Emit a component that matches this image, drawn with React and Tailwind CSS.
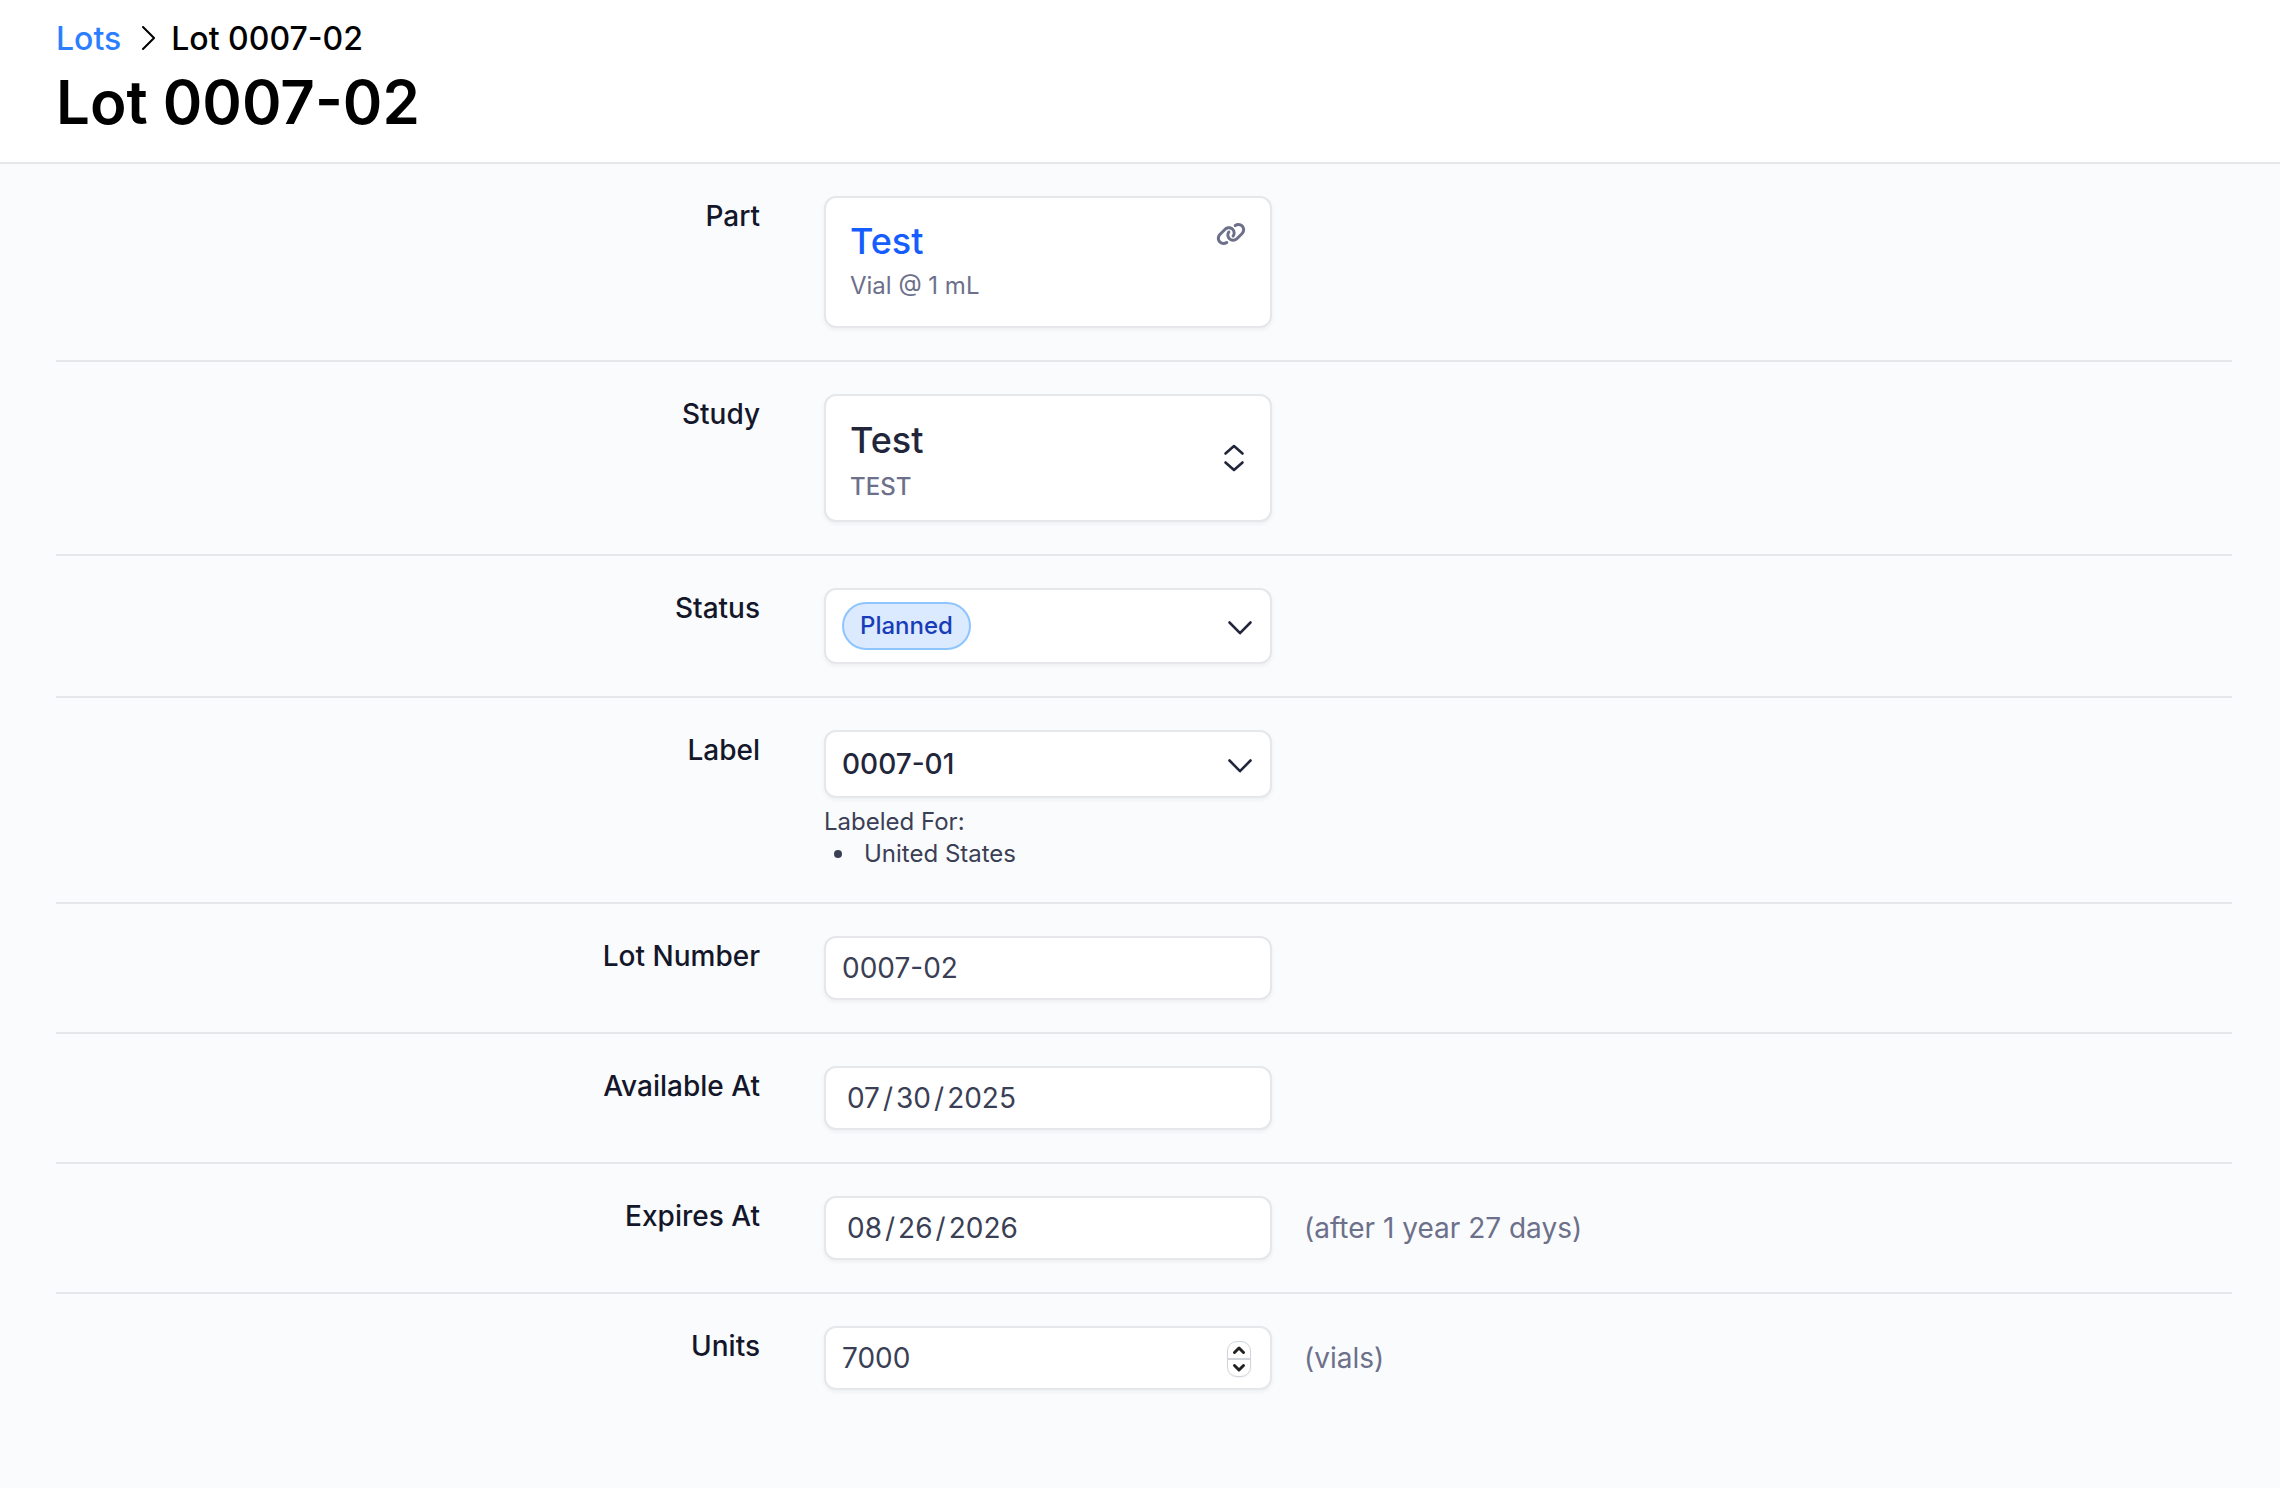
import React, { useState } from "react";
import { FaLink } from "react-icons/fa6";

const boxClass =
    "block w-full bg-white border-2 border-gray-200 rounded-xl shadow-[0_2px_4px_rgba(0,0,0,0.05)] focus:outline-none";

const inputClass = `${boxClass} h-16 px-4 text-[28px] text-[#3b3f55]`;

const dateClass = `${boxClass} h-16 px-5 text-[28px] text-[#3b3f55] [&::-webkit-calendar-picker-indicator]:hidden [&::-webkit-datetime-edit-text]:px-0.5`;

const ChevronDown = ({ className }) => (
    <svg className={className} width="28" height="28" viewBox="0 0 28 28" fill="none" stroke="currentColor" strokeWidth="2.6" strokeLinecap="round" strokeLinejoin="round">
        <path d="M3.5 10.5L14 21.2L24.5 10.5" />
    </svg>
);

const labelClass = "flex-1 text-right text-[28px] leading-10 font-medium text-[#14172a]";

const Row = ({ label, htmlFor, note, children }) => (
    <div className="flex gap-16 py-8 border-b-2 border-gray-200 last:border-b-0">
        {htmlFor ? (
            <label htmlFor={htmlFor} className={labelClass}>{label}</label>
        ) : (
            <span className={labelClass}>{label}</span>
        )}
        <div className="flex-2 flex items-center gap-8">
            <div className="w-[448px]">{children}</div>
            {note && <span className="text-[28px] leading-10 text-[#6c708a]">{note}</span>}
        </div>
    </div>
);

const App = () => {
    const [label, setLabel] = useState("0007-01");
    const [lotNumber, setLotNumber] = useState("0007-02");
    const [availableAt, setAvailableAt] = useState("2025-07-30");
    const [expiresAt, setExpiresAt] = useState("2026-08-26");
    const [units, setUnits] = useState(7000);

    return (
        <div className="min-h-screen bg-[#fafbfd] font-['Inter',sans-serif]">
            <header className="bg-white border-b-2 border-gray-200 px-14 pt-4 pb-[22px]">
                <nav aria-label="Breadcrumb" className="flex items-center gap-4 text-[32px] leading-[46px] font-medium text-black">
                    <a href="#lots" className="text-blue-500">Lots</a>
                    <svg width="18" height="28" viewBox="0 0 18 28" fill="none" stroke="currentColor" strokeWidth="2" strokeLinecap="round">
                        <path d="M6 2l11 11L6 24" />
                    </svg>
                    <span>Lot 0007-02</span>
                </nav>
                <h1 className="mt-0.5 text-[60px] leading-[76px] font-semibold text-black">Lot 0007-02</h1>
            </header>

            <main className="pl-14 pr-12">
                <Row label="Part">
                    <div className={`${boxClass} h-[132px]`}>
                        <div className="p-6 flex justify-between items-start">
                            <div>
                                <a href="#part" className="block text-[36px] leading-[38px] font-medium text-blue-600">Test</a>
                                <p className="text-2xl leading-[52px] text-[#6c708a]">Vial @ 1 mL</p>
                            </div>
                            <FaLink className="w-[30px] h-6 text-[#6c708a]" />
                        </div>
                    </div>
                </Row>

                <Row label="Study" htmlFor="study">
                    <button id="study" type="button" aria-haspopup="listbox" className={`${boxClass} h-32 px-6 text-left cursor-pointer`}>
                        <span className="flex justify-between items-center">
                            <span className="block pt-1.5">
                                <span className="block text-[36px] leading-[52px] font-medium text-[#22263a]">Test</span>
                                <span className="block text-2xl leading-[42px] font-medium text-[#6c708a]">TEST</span>
                            </span>
                            <svg className="text-[#22263a]" width="24" height="32" viewBox="0 0 24 32" fill="none" stroke="currentColor" strokeWidth="2.6" strokeLinecap="round" strokeLinejoin="round">
                                <path d="M3.5 11.5L12 4L20.5 11.5M3.5 20.5L12 28L20.5 20.5" />
                            </svg>
                        </span>
                    </button>
                </Row>

                <Row label="Status" htmlFor="status">
                    <button id="status" type="button" aria-haspopup="listbox" className={`${boxClass} h-[76px] px-4 cursor-pointer`}>
                        <span className="flex justify-between items-center">
                            <span className="border-2 border-blue-300 bg-blue-100 text-blue-800 rounded-full px-4 text-2xl leading-11 font-medium">
                                Planned
                            </span>
                            <ChevronDown className="text-[#22263a]" />
                        </span>
                    </button>
                </Row>

                <Row label="Label" htmlFor="label">
                    <div className="relative text-[#22263a]">
                        <select
                            id="label"
                            value={label}
                            onChange={(e) => setLabel(e.target.value)}
                            className={`${boxClass} appearance-none h-[68px] px-4 text-[28px] font-medium`}
                        >
                            <option value="0007-01">0007-01</option>
                        </select>
                        <ChevronDown className="absolute right-4.5 top-5 pointer-events-none" />
                    </div>
                    <div className="pt-2 text-2xl leading-8 text-[#3b3f55]">
                        <p>Labeled For:</p>
                        <ul className="pl-2.5">
                            <li className="flex items-center gap-5.5">
                                <span className="w-2 h-2 rounded-full bg-[#3b3f55]"></span>
                                United States
                            </li>
                        </ul>
                    </div>
                </Row>

                <Row label="Lot Number" htmlFor="lotNumber">
                    <input id="lotNumber" type="text" value={lotNumber} onChange={(e) => setLotNumber(e.target.value)} className={inputClass} />
                </Row>

                <Row label="Available At" htmlFor="availableAt">
                    <input id="availableAt" type="date" value={availableAt} onChange={(e) => setAvailableAt(e.target.value)} className={dateClass} />
                </Row>

                <Row label="Expires At" htmlFor="expiresAt" note="(after 1 year 27 days)">
                    <input id="expiresAt" type="date" value={expiresAt} onChange={(e) => setExpiresAt(e.target.value)} className={dateClass} />
                </Row>

                <Row label="Units" htmlFor="units" note="(vials)">
                    <div className="relative">
                        <input
                            id="units"
                            type="number"
                            value={units}
                            onChange={(e) => setUnits(Number(e.target.value))}
                            className={`${inputClass} [&::-webkit-inner-spin-button]:appearance-none`}
                        />
                        {/* stepper */}
                        <div className="absolute right-[21px] top-[15px] w-6 h-9 flex flex-col bg-white border border-gray-300 rounded-[10px] shadow-xs divide-y-2 divide-gray-300 text-[#222222] overflow-hidden">
                            <button type="button" aria-label="Increase units" onClick={() => setUnits(units + 1)} className="flex-1 flex items-center justify-center">
                                <svg width="14" height="10" viewBox="0 0 14 10" fill="none" stroke="currentColor" strokeWidth="3" strokeLinecap="round" strokeLinejoin="round">
                                    <path d="M2.5 7.5L7 3L11.5 7.5" />
                                </svg>
                            </button>
                            <button type="button" aria-label="Decrease units" onClick={() => setUnits(units - 1)} className="flex-1 flex items-center justify-center">
                                <svg width="14" height="10" viewBox="0 0 14 10" fill="none" stroke="currentColor" strokeWidth="3" strokeLinecap="round" strokeLinejoin="round">
                                    <path d="M2.5 2.5L7 7L11.5 2.5" />
                                </svg>
                            </button>
                        </div>
                    </div>
                </Row>
            </main>
        </div>
    );
};

export default App;
